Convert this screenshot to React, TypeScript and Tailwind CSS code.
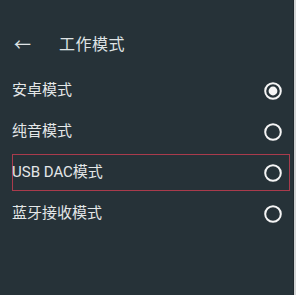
import { useState } from "react";

const modes = ["安卓模式", "纯音模式", "USB DAC模式", "蓝牙接收模式"];

const Radio = ({ checked }: { checked: boolean }) => (
  <svg width="20" height="20" viewBox="0 0 20 20" className="shrink-0">
    <circle cx="10" cy="10" r="7.8" fill="none" stroke="#f5f5f5" strokeWidth="2" />
    {checked && <circle cx="10" cy="10" r="4.4" fill="#f5f5f5" />}
  </svg>
);

export default function App() {
  const [selected, setSelected] = useState(0);
  const focused = 2;

  return (
    <div
      className="flex h-[295px] w-[296px] bg-[#263238]"
      style={{ fontFamily: 'Roboto, "Noto Sans CJK SC", sans-serif' }}
    >
      <div className="flex-1 pt-[21px]">
        <div className="flex h-[48px] items-center text-[#dfe3e5]">
          <span className="w-[59px] pl-[14px] text-[17px] leading-none">←</span>
          <span className="text-[16px] leading-none tracking-[0.5px]">工作模式</span>
        </div>

        <div className="mt-[3px] flex flex-col gap-[4px] pl-[12px] pr-[3px]">
          {modes.map((m, i) => (
            <button
              key={m}
              onClick={() => setSelected(i)}
              className={
                "flex h-[37px] items-center justify-between border-[1.5px] pr-[6px] text-left text-[15px] leading-none text-[#e4e7e8] " +
                (i === focused ? "border-[#a93b4c]" : "border-transparent")
              }
            >
              <span className="-ml-[1px]">{m}</span>
              <Radio checked={selected === i} />
            </button>
          ))}
        </div>
      </div>
      <div className="w-[1px] bg-[#1f282d]" />
      <div className="w-[2px] bg-[#d4d6d7]" />
    </div>
  );
}
